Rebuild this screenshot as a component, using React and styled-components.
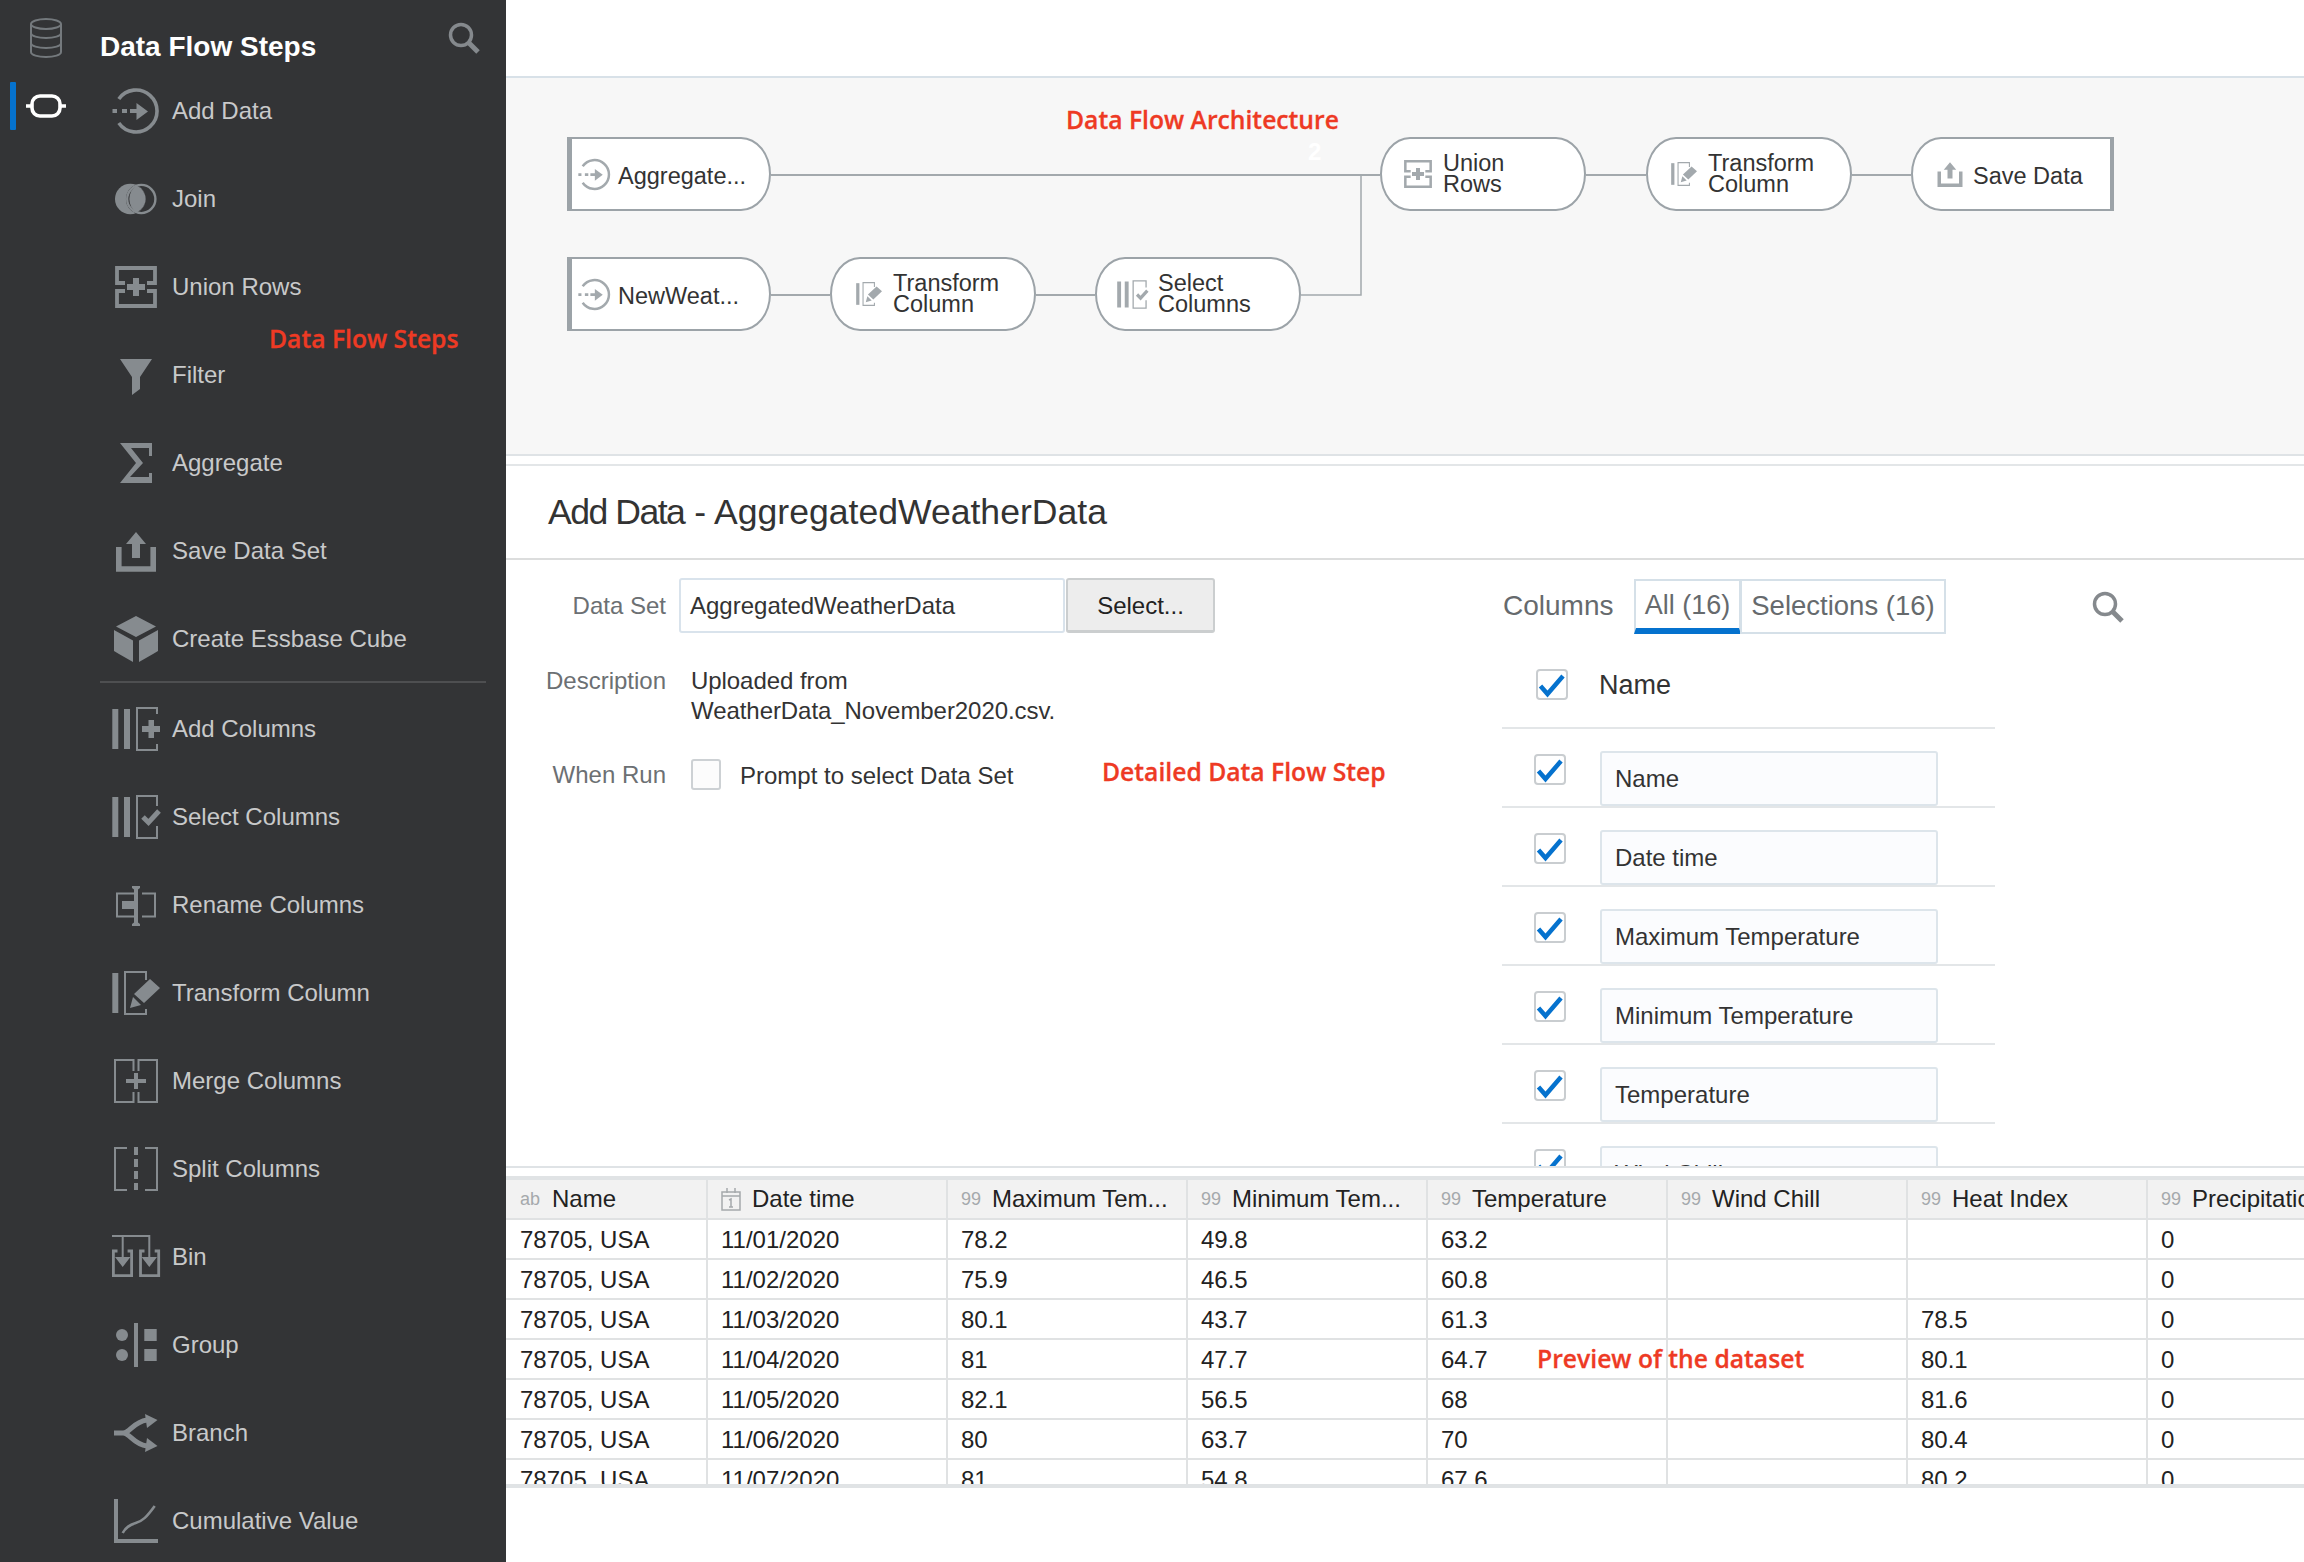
import React from 'react';
import styled, {createGlobalStyle} from 'styled-components';

const Global = createGlobalStyle`
	html, body {
		margin: 0;
		padding: 0;
		background: #fff;
		overflow: hidden;
	}
	body {
		font-family: "Liberation Sans", Arial, sans-serif;
		font-size: 24px;
		color: #333;
	}
	* {
		box-sizing: border-box;
	}
`;

const Page = styled.div`
	display: flex;
	width: 2304px;
	height: 1562px;
	overflow: hidden;
`;

/* sidebar */
const Sidebar = styled.aside`
	position: relative;
	display: flex;
	flex: 0 0 506px;
	height: 1562px;
	overflow: hidden;
	background: #333436;
`;
const Rail = styled.div`
	flex: 0 0 100px;
	display: flex;
	flex-direction: column;
	padding-top: 17px;
`;
const RailIcon = styled.svg`
	display: block;
	margin-left: 29px;
	color: #74797d;
`;
const RailTab = styled.div`
	display: flex;
	align-items: center;
	height: 48px;
	margin: 23px 0 0 10px;
`;
const RailBar = styled.div`
	width: 6px;
	height: 48px;
	border-radius: 1px;
	background: #0572ce;
`;
const RailPill = styled.svg`
	display: block;
	margin-left: 10px;
	color: #fff;
`;
const Nav = styled.nav`
	flex: 1;
	display: flex;
	flex-direction: column;
`;
const NavHead = styled.div`
	display: flex;
	justify-content: space-between;
	flex: 0 0 67px;
	padding-right: 26px;
`;
const NavTitle = styled.h1`
	margin: 27px 0 0;
	font-size: 28px;
	line-height: 40px;
	font-weight: 700;
	color: #fff;
`;
const SearchIcon = styled.svg`
	display: block;
	flex: none;
	margin-top: ${props => props.$top || 0}px;
	margin-left: ${props => props.$left || 0}px;
	color: #85898d;
`;
const NavItem = styled.div`
	display: flex;
	align-items: center;
	flex: 0 0 88px;
	gap: 12px;
	padding-left: 12px;
	color: #c8c9ca;
	line-height: 30px;
`;
const NavIcon = styled.span`
	display: block;
	width: 48px;
	height: 48px;
	color: #868b8f;
`;
const NavDivider = styled.div`
	flex: none;
	width: 386px;
	height: 2px;
	margin: -2px 0 2px;
	background: #4e4f51;
`;
const Callout = styled.div`
	position: absolute;
	left: ${props => props.$left}px;
	top: ${props => props.$top}px;
	font-family: "Open Sans", sans-serif;
	font-size: 24.700px;
	line-height: 30px;
	font-weight: 600;
	-webkit-text-stroke: .3px #ee3a24;
	white-space: nowrap;
	color: #ee3a24;
`;

/* main column */
const Main = styled.main`
	flex: 1;
	min-width: 0;
	display: flex;
	flex-direction: column;
`;
const TopBar = styled.div`
	flex: 0 0 78px;
	border-bottom: 2px solid #d8e1e8;
`;
const Canvas = styled.section`
	position: relative;
	flex: 0 0 378px;
	background: #f7f7f7;
	border-bottom: 2px solid #dfe3e6;
`;
const Wires = styled.svg`
	position: absolute;
	left: 0;
	top: 0;
`;
const Ghost = styled.div`
	position: absolute;
	left: 802px;
	top: 60px;
	font-weight: 700;
	color: #fff;
`;
const Node = styled.div`
	position: absolute;
	left: ${props => props.$x}px;
	top: ${props => props.$y}px;
	width: ${props => props.$w}px;
	height: 74px;
	display: flex;
	align-items: center;
	gap: ${props => props.$gap}px;
	padding-left: ${props => props.$pad}px;
	background: #fff;
	border: 2px solid #9ca3a8;
	border-left-width: ${props => props.$kind === 'start' ? 5 : 2}px;
	border-right-width: ${props => props.$kind === 'end' ? 4 : 2}px;
	border-radius: ${props => props.$kind === 'start' ? '0 30px 30px 0 / 0 37px 37px 0'
		: props.$kind === 'end' ? '30px 0 0 30px / 37px 0 0 37px' : '30px / 37px'};
	color: #333;
	font-size: 23.500px;
	line-height: 21.500px;
`;
const NodeIcon = styled.span`
	display: block;
	flex: none;
	width: ${props => props.$size}px;
	height: ${props => props.$size}px;
	color: #a3a9ad;
`;
const NodeLabel = styled.div`
	padding-top: ${props => props.$single ? 5 : 0}px;
`;

const PanelHead = styled.header`
	display: flex;
	align-items: center;
	flex: 0 0 96px;
	margin-top: 8px;
	padding-left: 42px;
	border-top: 2px solid #e3e6e8;
	border-bottom: 2px solid #dcdddd;
`;
const PanelTitle = styled.h2`
	margin: 0;
	font-size: 35.600px;
	font-weight: 400;
	color: #333;
`;
const TitleLead = styled.span`
	letter-spacing: -1.500px;
`;
const PanelBody = styled.section`
	position: relative;
	display: flex;
	flex: 0 0 608px;
	overflow: hidden;
	border-bottom: 2px solid #dfe3e6;
`;
const Form = styled.div`
	flex: 0 0 996px;
	padding-top: 18px;
`;
const FormRow = styled.div`
	display: flex;
	align-items: ${props => props.$align || 'center'};
	margin-top: ${props => props.$gap || 0}px;
`;
const FormLabel = styled.div`
	flex: 0 0 160px;
	margin-right: 25px;
	text-align: right;
	line-height: 30px;
	color: #6c7073;
`;
const SourceInput = styled.div`
	display: flex;
	align-items: center;
	width: 386px;
	height: 55px;
	margin-left: -12px;
	padding: 1px 0 0 9px;
	background: #fff;
	border: 2px solid #d9e3ec;
	border-radius: 3px;
	color: #333;
`;
const SelectButton = styled.button`
	width: 149px;
	height: 55px;
	margin-left: 1px;
	padding: 2px 0 0;
	font: inherit;
	color: #222;
	background: #ededed;
	border: 2px solid #cbcecf;
	border-bottom-width: 3px;
	border-radius: 3px;
`;
const Description = styled.div`
	line-height: 30px;
	letter-spacing: -.06px;
	color: #333;
`;
const PlainBox = styled.div`
	flex: none;
	width: 30px;
	height: 31px;
	background: #fcfcfc;
	border: 2px solid #cdd1d4;
	border-radius: 3px;
`;
const PromptText = styled.div`
	margin: 3px 0 0 19px;
	line-height: 30px;
	color: #333;
`;

const Columns = styled.div`
	flex: 0 0 493px;
	min-width: 0;
	padding-top: 18px;
`;
const TabRow = styled.div`
	display: flex;
	align-items: center;
	height: 56px;
`;
const ColumnsLabel = styled.div`
	flex: none;
	width: 132px;
	padding-left: 1px;
	font-size: 28px;
	color: #666a6d;
`;
const Tab = styled.div`
	display: flex;
	flex: none;
	justify-content: center;
	align-items: center;
	width: ${props => props.$w}px;
	height: 55px;
	margin-left: ${props => props.$active ? 0 : -1}px;
	padding-top: ${props => props.$active ? 3 : 0}px;
	font-size: ${props => props.$active ? 27 : 27.5}px;
	color: #666a6d;
	border: 2px solid #d5e0e8;
	border-bottom: ${props => props.$active ? '6px solid #0572ce' : '2px solid #d5e0e8'};
`;
const ColumnsHead = styled.div`
	display: flex;
	align-items: center;
	height: 95px;
	padding: 8px 0 0 34px;
	border-bottom: 2px solid #e3e6e8;
`;
const ColumnsHeadName = styled.div`
	margin: 2px 0 0 31px;
	font-size: 27px;
	color: #333;
`;
const ColumnRow = styled.div`
	display: flex;
	align-items: flex-start;
	height: 79px;
	padding: 22px 0 0 32px;
	border-bottom: 2px solid #e3e6e8;
`;
const CheckBox = styled.svg`
	display: block;
	flex: none;
	margin-top: ${props => props.$top || 0}px;
`;
const ColumnName = styled.div`
	display: flex;
	align-items: center;
	width: 338px;
	height: 55px;
	margin-left: 34px;
	padding: 1px 0 0 13px;
	background: #fbfcfe;
	border: 2px solid #dde5eb;
	border-radius: 3px;
	color: #333;
`;

/* data preview */
const Preview = styled.section`
	position: relative;
	flex: 0 0 312px;
	margin-top: 8px;
	overflow: hidden;
	border-top: 4px solid #e0e3e5;
	border-bottom: 4px solid #e0e3e5;
`;
const TableRow = styled.div`
	display: flex;
	height: 40px;
	background: ${props => props.$head ? '#f2f2f2' : '#fff'};
	border-bottom: 2px solid #e0e2e3;
`;
const Cell = styled.div`
	display: flex;
	align-items: center;
	flex: 0 0 ${props => props.$first ? 202 : 240}px;
	padding: ${props => props.$head ? 0 : 1}px 0 0 ${props => props.$first ? 14 : 13}px;
	white-space: nowrap;
	border-right: 2px solid #e0e2e3;
	color: #222;
`;
const TypeMark = styled.span`
	display: block;
	flex: 0 0 ${props => props.$w || 31}px;
	font-size: 18px;
	color: #a5a9ac;
`;
const GlyphSvg = styled.svg`
	display: block;
	overflow: visible;
`;

const stroke = {fill: 'none', stroke: 'currentColor'};

const icons = {
	addData: <>
		<path {...stroke} strokeWidth="3.6" d="M6.8 12A21 21 0 1 1 6.8 36" />
		<path d="M.5 22h4.500v4H.5zM10 22h5v4h-5zM18 22h7v4h-7zM24.500 16L36 24.500 24.500 33z" />
	</>,
	join: <>
		<circle cx="18.300" cy="24" r="15.300" />
		<path fill="#333436" d="M23.800 9.700A15.300 15.300 0 0 1 23.800 38.300 15.300 15.300 0 0 1 23.800 9.700z" />
		<circle {...stroke} cx="29.300" cy="24" r="14.100" strokeWidth="2.400" />
		<path d="M24.500 10.500A14.600 14.600 0 0 1 24.500 37.500 16.300 16.300 0 0 1 24.500 10.500z" />
	</>,
	union: <>
		<path {...stroke} strokeWidth="3.800" d="M13 20H5V5h38v15h-8M13 28H5v15h38V28h-8" />
		<path d="M15 21h6v-6h6v6h6v6h-6v6h-6v-6h-6z" />
	</>,
	filter: <path d="M8 8h32L28 26v12l-8 6V26z" />,
	sigma: <path d="M8 4h32v13h-3v-8H19l12 15-13 14h19v-4h3v10H8l16-20z" />,
	save: <>
		<path {...stroke} strokeWidth="5.600" d="M6.800 20v22h34.400V20" />
		<path d="M24 5l10 12h-6v14h-8V17h-6z" />
	</>,
	cube: <path d="M24 1l20 10.500L24 22 4 11.500zM2 15l19 10.500V47L7 39l-5-3zM46 15L27 25.500V47l14-8 5-3z" />,
	addColumns: <>
		<path d="M.3 4h6v40h-6zM12 4h6v40h-6z" />
		<path {...stroke} strokeWidth="2" d="M45 9V3H25v42h20v-6" />
		<path d="M30 21h6.500v-6h5.500v6h6v6h-6v6h-5.500v-6H30z" />
	</>,
	selectColumns: <>
		<path d="M.3 4h6v40h-6zM12 4h6v40h-6z" />
		<path {...stroke} strokeWidth="2" d="M45 13V3H25v42h20V33" />
		<path {...stroke} strokeWidth="5" d="M31 24l5.500 5.500L47 18" />
	</>,
	rename: <>
		<path {...stroke} strokeWidth="2" d="M22 12.500H5v23h17M30 12.500h13v23H30" />
		<path d="M10 20h14v8H10zM20 5h8v2l-2 1.500V41.500l2 1.500v2h-8v-2l2-1.500V8.500L20 7z" />
	</>,
	transform: <>
		<path d="M.3 4h6v40h-6z" />
		<path {...stroke} strokeWidth="2" d="M34 11V3H13v42h21v-5" />
		<path d="M38 10l10 9-16 15-10-9zM21 28l8 8-11 3z" />
	</>,
	merge: <>
		<path {...stroke} strokeWidth="2" d="M21.500 14V3H3v42h18.500V35M26.500 14V3H45v42H26.500V35" />
		<path d="M22 16h4v6h8v4h-8v6h-4v-6h-8v-4h8z" />
	</>,
	split: <>
		<path {...stroke} strokeWidth="2" d="M15 3H3v42h12M33 3h12v42H33" />
		<path d="M22 2h4v8h-4zM22 14h4v8h-4zM22 26h4v8h-4zM22 38h4v7h-4z" />
	</>,
	bin: <>
		<path {...stroke} strokeWidth="2" d="M0 3h38.300M10.700 3v22M37.300 3v22" />
		<path {...stroke} strokeWidth="2.800" d="M5.500 18H1.400v24.600h18.200V18h-4M32.500 18h-4v24.600h18.200V18h-4" />
		<path d="M3 24h15.400l-7.700 10zM29.600 24H45l-7.700 10z" />
	</>,
	group: <>
		<circle cx="10" cy="14" r="6" />
		<circle cx="10" cy="34" r="6" />
		<path d="M22 2h4v44h-4zM32.300 8h12.400v12H32.300zM32.300 28h12.400v12H32.300z" />
	</>,
	branch: <>
		<path {...stroke} strokeWidth="5" d="M2 24h9c7 0 10-11 24-13M11 24c7 0 10 11 24 13" />
		<path d="M33 5l12.500 6L35 19zM33 43l12.500-6L35 29z" />
	</>,
	cumulative: <>
		<path d="M2 2h4v40h40v4H2z" />
		<path {...stroke} strokeWidth="2.600" d="M10.700 36c3-6 7-8 13-10 7-2 11-6 19-17" />
	</>
};

const Glyph = ({name}) => (
	<GlyphSvg width="100%" height="100%" viewBox="0 0 48 48" fill="currentColor">
		{icons[name]}
	</GlyphSvg>
);

const Search = ({top, left}) => (
	<SearchIcon $top={top} $left={left} width="32" height="32" viewBox="0 0 32 32" fill="none" stroke="currentColor">
		<circle cx="13" cy="13" r="10.500" strokeWidth="3.500" />
		<path d="M21 21l9 9" strokeWidth="5" />
	</SearchIcon>
);

const Check = ({top}) => (
	<CheckBox $top={top} width="32" height="31" viewBox="0 0 32 31" fill="none">
		<rect x="1" y="1" width="30" height="29" rx="3" fill="#fff" stroke="#c9cdd0" strokeWidth="2" />
		<path d="M4.500 17l7 8L27 7" stroke="#0572ce" strokeWidth="4.500" />
	</CheckBox>
);

const steps = [
	['addData', 'Add Data'], ['join', 'Join'], ['union', 'Union Rows'], ['filter', 'Filter'],
	['sigma', 'Aggregate'], ['save', 'Save Data Set'], ['cube', 'Create Essbase Cube'], null,
	['addColumns', 'Add Columns'], ['selectColumns', 'Select Columns'], ['rename', 'Rename Columns'],
	['transform', 'Transform Column'], ['merge', 'Merge Columns'], ['split', 'Split Columns'],
	['bin', 'Bin'], ['group', 'Group'], ['branch', 'Branch'], ['cumulative', 'Cumulative Value']
];

const nodes = [
	{x: 61, y: 59, w: 204, kind: 'start', icon: 'addData', size: 33, pad: 6, gap: 7, label: ['Aggregate...']},
	{x: 874, y: 59, w: 206, icon: 'union', size: 32, pad: 20, gap: 9, label: ['Union', 'Rows']},
	{x: 1140, y: 59, w: 206, icon: 'transform', size: 26, pad: 23, gap: 11, label: ['Transform', 'Column']},
	{x: 1405, y: 59, w: 203, kind: 'end', icon: 'save', size: 30, pad: 22, gap: 8, label: ['Save Data']},
	{x: 61, y: 179, w: 204, kind: 'start', icon: 'addData', size: 33, pad: 6, gap: 7, label: ['NewWeat...']},
	{x: 324, y: 179, w: 206, icon: 'transform', size: 26, pad: 24, gap: 11, label: ['Transform', 'Column']},
	{x: 589, y: 179, w: 206, icon: 'selectColumns', size: 31, pad: 20, gap: 10, label: ['Select', 'Columns']}
];

const columnNames = ['Name', 'Date time', 'Maximum Temperature', 'Minimum Temperature', 'Temperature', 'Wind Chill'];

const headers = [
	['ab', 'Name'], ['cal', 'Date time'], ['99', 'Maximum Tem...'], ['99', 'Minimum Tem...'],
	['99', 'Temperature'], ['99', 'Wind Chill'], ['99', 'Heat Index'], ['99', 'Precipitation']
];

const rows = [
	['11/01/2020', '78.2', '49.8', '63.2', '', '', '0'],
	['11/02/2020', '75.9', '46.5', '60.8', '', '', '0'],
	['11/03/2020', '80.1', '43.7', '61.3', '', '78.5', '0'],
	['11/04/2020', '81', '47.7', '64.7', '', '80.1', '0'],
	['11/05/2020', '82.1', '56.5', '68', '', '81.6', '0'],
	['11/06/2020', '80', '63.7', '70', '', '80.4', '0'],
	['11/07/2020', '81', '54.8', '67.6', '', '80.2', '0']
];

const Calendar = () => (
	<TypeMark>
		<GlyphSvg width="20" height="24" viewBox="0 0 20 24" fill="none" stroke="currentColor">
			<path strokeWidth="1.500" d="M1 5h18v18H1zM1 9h18M6 1v5M14 1v5" />
			<path strokeWidth="1.500" d="M8 13l2-1v8M8 20h4" />
		</GlyphSvg>
	</TypeMark>
);

export default function App() {
	return (
		<Page>
			<Global />
			<Sidebar>
				<Rail>
					<RailIcon width="34" height="42" viewBox="0 0 34 42" fill="none" stroke="currentColor" strokeWidth="2">
						<ellipse cx="17" cy="7" rx="15" ry="5" />
						<path d="M2 7v28c0 3 7 5 15 5s15-2 15-5V7M2 16c0 3 7 5 15 5s15-2 15-5M2 26c0 3 7 5 15 5s15-2 15-5" />
					</RailIcon>
					<RailTab>
						<RailBar />
						<RailPill width="40" height="24" viewBox="0 0 40 24" fill="none" stroke="currentColor" strokeWidth="3.600">
							<rect x="6" y="2" width="28" height="20" rx="8" />
							<path d="M0 12h6M34 12h6" />
						</RailPill>
					</RailTab>
				</Rail>
				<Nav>
					<NavHead>
						<NavTitle>Data Flow Steps</NavTitle>
						<Search top={22} />
					</NavHead>
					{steps.map((step, i) => step ? (
						<NavItem key={step[0]}>
							<NavIcon><Glyph name={step[0]} /></NavIcon>
							{step[1]}
						</NavItem>
					) : <NavDivider key={i} />)}
				</Nav>
				<Callout $left={269} $top={324}>Data Flow Steps</Callout>
			</Sidebar>
			<Main>
				<TopBar />
				<Canvas>
					<Wires width="1798" height="376" viewBox="0 0 1798 376" fill="none" stroke="#a3a9ad">
						<path strokeWidth="2" d="M265 97H874M265 217h59M530 217h59M1080 97h60M1346 97h59" />
						<path strokeWidth="1.500" d="M795 217h60V97" />
					</Wires>
					<Callout $left={560} $top={27}>Data Flow Architecture</Callout>
					<Ghost>2</Ghost>
					{nodes.map(node => (
						<Node key={node.x + '-' + node.y} $x={node.x} $y={node.y} $w={node.w} $kind={node.kind} $pad={node.pad} $gap={node.gap}>
							<NodeIcon $size={node.size}><Glyph name={node.icon} /></NodeIcon>
							<NodeLabel $single={node.label.length === 1}>{node.label.map(line => <div key={line}>{line}</div>)}</NodeLabel>
						</Node>
					))}
				</Canvas>
				<PanelHead>
					<PanelTitle><TitleLead>Add Data</TitleLead> - AggregatedWeatherData</PanelTitle>
				</PanelHead>
				<PanelBody>
					<Form>
						<FormRow>
							<FormLabel>Data Set</FormLabel>
							<SourceInput>AggregatedWeatherData</SourceInput>
							<SelectButton>Select...</SelectButton>
						</FormRow>
						<FormRow $gap={33} $align="flex-start">
							<FormLabel>Description</FormLabel>
							<Description>Uploaded from<br />WeatherData_November2020.csv.</Description>
						</FormRow>
						<FormRow $gap={32}>
							<FormLabel>When Run</FormLabel>
							<PlainBox />
							<PromptText>Prompt to select Data Set</PromptText>
						</FormRow>
					</Form>
					<Columns>
						<TabRow>
							<ColumnsLabel>Columns</ColumnsLabel>
							<Tab $active $w={107}>All (16)</Tab>
							<Tab $w={206}>Selections (16)</Tab>
							<Search left={146} top={2} />
						</TabRow>
						<ColumnsHead>
							<Check />
							<ColumnsHeadName>Name</ColumnsHeadName>
						</ColumnsHead>
						{columnNames.map(name => (
							<ColumnRow key={name}>
								<Check top={3} />
								<ColumnName>{name}</ColumnName>
							</ColumnRow>
						))}
					</Columns>
					<Callout $left={596} $top={197}>Detailed Data Flow Step</Callout>
				</PanelBody>
				<Preview>
					<TableRow $head>
						{headers.map(([type, title], i) => (
							<Cell key={title} $head $first={i === 0}>
								{type === 'cal' ? <Calendar /> : <TypeMark $w={i === 0 ? 32 : 31}>{type}</TypeMark>}
								{title}
							</Cell>
						))}
					</TableRow>
					{rows.map(row => (
						<TableRow key={row[0]}>
							<Cell $first>78705, USA</Cell>
							{row.map((value, i) => <Cell key={i}>{value}</Cell>)}
						</TableRow>
					))}
					<Callout $left={1031} $top={164}>Preview of the dataset</Callout>
				</Preview>
			</Main>
		</Page>
	);
}
